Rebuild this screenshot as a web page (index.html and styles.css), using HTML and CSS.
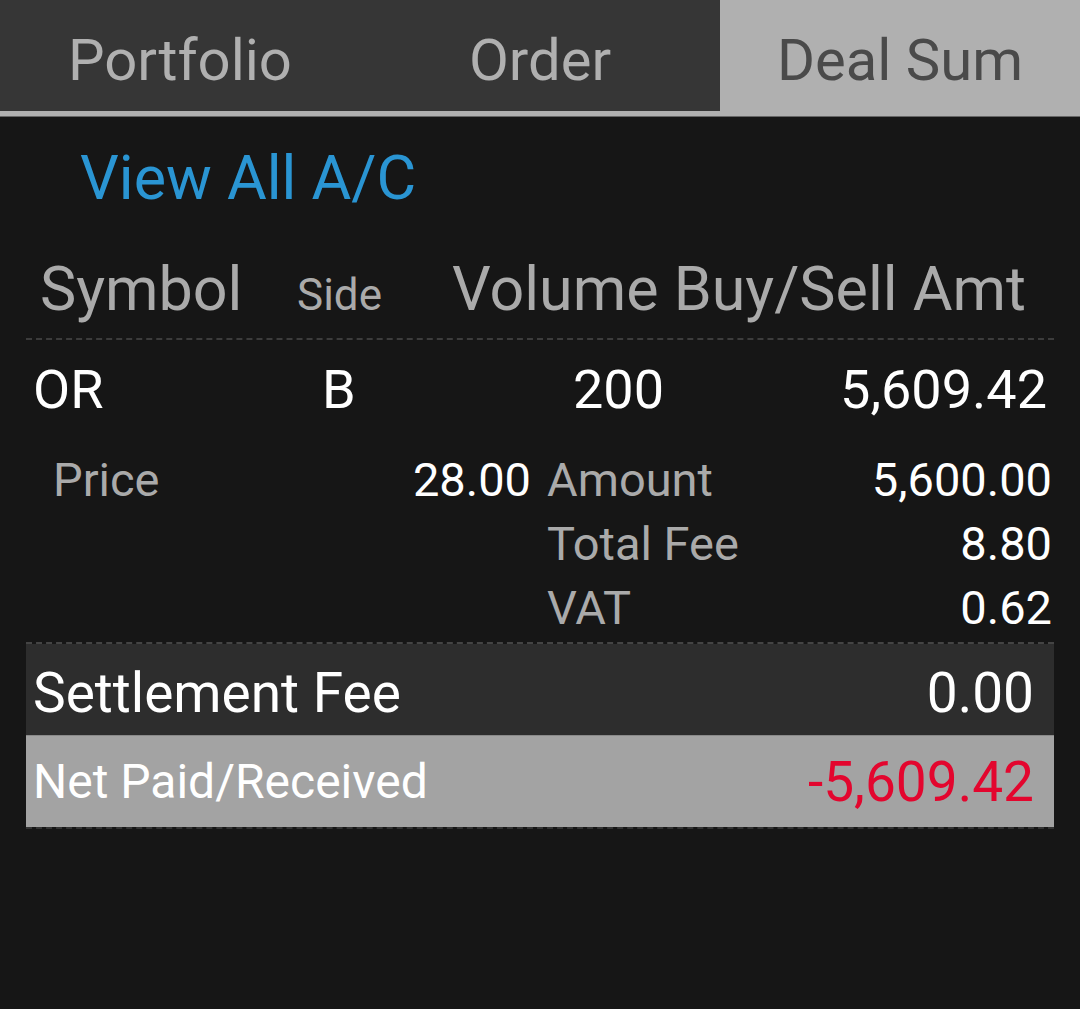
FILE: index.html
```html
<!DOCTYPE html>
<html lang="en">
<head>
    <meta charset="UTF-8">
    <meta name="viewport" content="width=device-width, initial-scale=1.0">
    <title>Deal Sum</title>
    <link rel="stylesheet" href="styles.css">
</head>
<body>
    <div id="tabBar">
        <div class="tab">Portfolio</div>
        <div class="tab">Order</div>
        <div class="tab active">Deal Sum</div>
    </div>

    <div id="content">
        <div id="viewAll">View All A/C</div>

        <div class="headRow">
            <div class="colSymbol">Symbol</div>
            <div class="colSide">Side</div>
            <div class="colAmt">Volume Buy/Sell Amt</div>
        </div>

        <div class="dealRow">
            <div class="colSymbol">OR</div>
            <div class="colSide">B</div>
            <div class="colVol">200</div>
            <div class="colAmt">5,609.42</div>
        </div>

        <div class="detailRow first">
            <div class="detailLeft">
                <span class="label">Price</span>
                <span class="value">28.00</span>
            </div>
            <div class="detailRight">
                <span class="label">Amount</span>
                <span class="value">5,600.00</span>
            </div>
        </div>
        <div class="detailRow">
            <div class="detailLeft"></div>
            <div class="detailRight">
                <span class="label">Total Fee</span>
                <span class="value">8.80</span>
            </div>
        </div>
        <div class="detailRow">
            <div class="detailLeft"></div>
            <div class="detailRight">
                <span class="label">VAT</span>
                <span class="value">0.62</span>
            </div>
        </div>

        <div id="settlement">
            <span>Settlement Fee</span>
            <span>0.00</span>
        </div>
        <div id="netPaid">
            <span class="netLabel">Net Paid/Received</span>
            <span class="netValue">-5,609.42</span>
        </div>
    </div>
</body>
</html>
```

FILE: styles.css
```css
body {
    margin: 0;
    background-color: #161616;
    font-family: Roboto, "Noto Sans", sans-serif;
    color: #ffffff;
}

#tabBar {
    display: flex;
    background-color: #363636;
    border-bottom: 5px solid #b0b0b0;
    box-shadow: 0 1px 0 #666666;
    margin-bottom: 1px;
}

.tab {
    flex: 1;
    height: 102px;
    padding-top: 9px;
    line-height: 102px;
    text-align: center;
    font-size: 58px;
    color: #b0b0b0;
}

.tab.active {
    background-color: #b0b0b0;
    color: #4a4a4a;
}

#content {
    padding: 0 26px;
}

#viewAll {
    padding: 26px 0 0 54px;
    font-size: 61px;
    line-height: 70px;
    color: #2a95d3;
}

.headRow {
    display: flex;
    align-items: baseline;
    margin-top: 41px;
    padding-bottom: 8px;
    border-bottom: 2px dashed #3c3c3c;
    line-height: 70px;
    color: #aaaaaa;
    font-size: 61px;
}

.headRow .colSymbol {
    width: 257px;
    padding-left: 14px;
}

.headRow .colSide {
    width: 155px;
    font-size: 44px;
}

.dealRow {
    display: flex;
    margin-top: 18px;
    font-size: 54px;
    line-height: 64px;
}

.dealRow .colSymbol {
    width: 289px;
    padding-left: 7px;
}

.dealRow .colSide {
    width: 251px;
}

.dealRow .colAmt {
    flex: 1;
    text-align: right;
    padding-right: 7px;
}

.detailRow {
    display: flex;
    font-size: 47px;
    line-height: 64px;
}

.detailRow.first {
    margin-top: 26px;
}

.detailLeft {
    width: 478px;
    padding-left: 27px;
    display: flex;
    justify-content: space-between;
}

.detailRight {
    flex: 1;
    padding: 0 2px 0 16px;
    display: flex;
    justify-content: space-between;
}

.label {
    color: #aaaaaa;
}

#settlement {
    display: flex;
    justify-content: space-between;
    margin-top: 2px;
    height: 83px;
    padding: 8px 20px 0 7px;
    line-height: 83px;
    font-size: 55px;
    background-color: #2d2d2d;
    background-clip: padding-box;
    border-top: 2px dashed #444444;
}

#netPaid {
    display: flex;
    justify-content: space-between;
    align-items: center;
    height: 91px;
    padding: 0 20px 0 7px;
    background-color: #a3a3a3;
    background-clip: padding-box;
    border-top: 1px solid #8a8a8a;
    border-bottom: 2px dashed #333333;
}

.netLabel {
    font-size: 48px;
}

.netValue {
    font-size: 55px;
    color: #e3062e;
}
```
